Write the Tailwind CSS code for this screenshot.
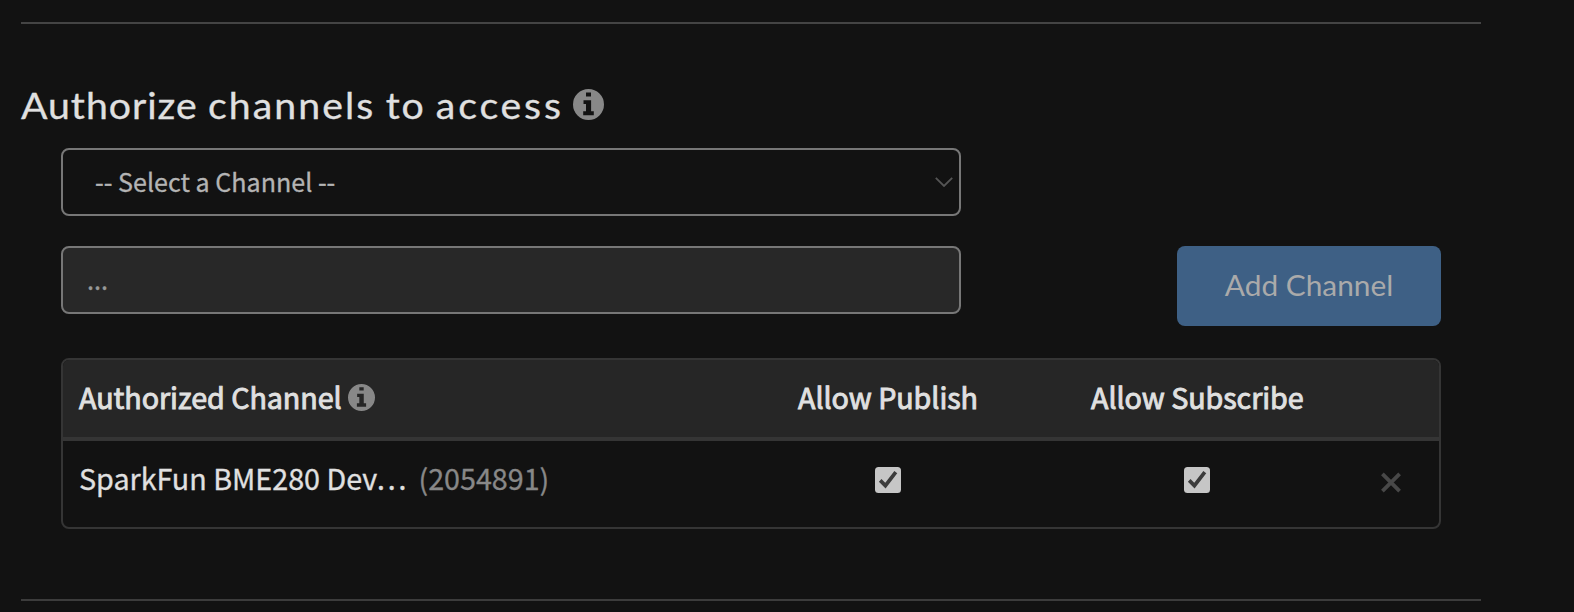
<!DOCTYPE html>
<html lang="en">
<head>
<meta charset="utf-8">
<title>Authorize channels</title>
<script src="https://cdn.jsdelivr.net/npm/@tailwindcss/browser@4"></script>
</head>
<body class="h-[612px] overflow-hidden bg-[#121212] font-['Noto_Sans_CJK_SC',sans-serif] text-[#e0e0e0]">
<svg class="hidden">
  <symbol id="info" viewBox="0 0 31 31">
    <path fill="currentColor" fill-rule="evenodd" d="M15.5 0a15.5 15.5 0 1 0 0 31a15.5 15.5 0 1 0 0-31zM13 3.6h5v4h-5zM10.5 11.2h7.6v11h2.7v4H10.2v-4h2.8v-7.2h-2.5z"/>
  </symbol>
  <symbol id="check" viewBox="0 0 26 26">
    <rect width="26" height="26" rx="3.5" fill="#c6c6c6"/>
    <path d="M5.2 13.4L10.4 18.6L20.8 5.2" fill="none" stroke="#3b3b3b" stroke-width="3.7"/>
  </symbol>
</svg>
<main class="mt-[22px] ml-[21px] flex h-[579px] w-[1460px] flex-col border-b-2 border-[#3c3c3c]">
  <div class="h-0.5 shrink-0 bg-[#444]"></div>
  <h2 class="mt-[49px] mb-[11px] flex h-16 shrink-0 items-center font-['Lato',sans-serif] text-[36px] leading-[42px]">
    <span class="w-[552px] shrink-0"><span class="inline-flex origin-left scale-x-[1.089] gap-[9.5px] whitespace-nowrap [-webkit-text-stroke:0.3px]"><span class="tracking-[0.9px]">Authorize </span><span class="tracking-[1.9px]">channels </span><span class="tracking-[1.7px]">to </span><span class="tracking-[2.6px]">access</span></span></span>
    <svg class="mb-px size-[31px] shrink-0"><use href="#info" class="text-[#888]"/></svg>
  </h2>
  <section class="ml-10 flex w-[1380px] flex-col">
    <div class="flex h-[68px] w-[900px] items-center justify-between rounded-lg border-2 border-[#777] pr-[6px] pl-[32px] text-[25.1px] text-[#b4b4b4]">
      <span class="pb-[2px] leading-[36px] whitespace-nowrap [-webkit-text-stroke:0.3px]">-- Select a Channel --</span>
      <svg class="h-[10px] w-[18px]" viewBox="0 0 18 10" fill="none" stroke="#555" stroke-width="1.8"><path d="M.8.8L9 9L17.2.8"/></svg>
    </div>
    <div class="mt-[30px] flex justify-between">
      <div class="flex h-[68px] w-[900px] items-center rounded-lg border-2 border-[#777] bg-[#282828] pl-6 text-[25.2px] text-[#999]"><span class="[-webkit-text-stroke:0.3px]">...</span></div>
      <button class="h-20 w-[264px] rounded-lg bg-[#3e6085] pb-0.5 font-['Lato',sans-serif] text-[28px] text-[#aaa]"><span class="inline-block scale-x-[1.065]">Add Channel</span></button>
    </div>
    <div class="mt-8 h-[171px] overflow-hidden rounded-lg border-2 border-[#353535] text-[28.7px]">
      <div class="flex h-[81px] items-center border-b-4 border-[#353535] bg-[#262626] pl-4 tracking-[-0.05px]">
        <div class="flex w-[719px] items-center gap-[6px]">
          <span class="pb-[3px] whitespace-nowrap [-webkit-text-stroke:0.9px]">Authorized Channel</span>
          <svg class="mb-[2px] size-[27px] text-[#888]" viewBox="0 0 31 31"><use href="#info"/></svg>
        </div>
        <span class="w-[293px] pb-[3px] whitespace-nowrap [-webkit-text-stroke:0.9px]">Allow Publish</span>
        <span class="pb-[3px] whitespace-nowrap [-webkit-text-stroke:0.9px]">Allow Subscribe</span>
      </div>
      <div class="flex h-[78px] items-center pl-4">
        <div class="flex w-[796px] gap-[12px] pb-[4px] whitespace-nowrap [-webkit-text-stroke:0.3px]"><span>SparkFun BME280 Dev…</span><span class="text-[#888]">(2054891)</span></div>
        <svg class="mr-[283px] size-[26px]"><use href="#check"/></svg>
        <svg class="mr-[171px] size-[26px]"><use href="#check"/></svg>
        <svg class="mt-[4px] h-[21px] w-5" viewBox="0 0 20 21" fill="none" stroke="#484848" stroke-width="3.8"><path d="M1.4 1.9L18.6 19.1M18.6 1.9L1.4 19.1"/></svg>
      </div>
    </div>
  </section>
</main>
</body>
</html>
